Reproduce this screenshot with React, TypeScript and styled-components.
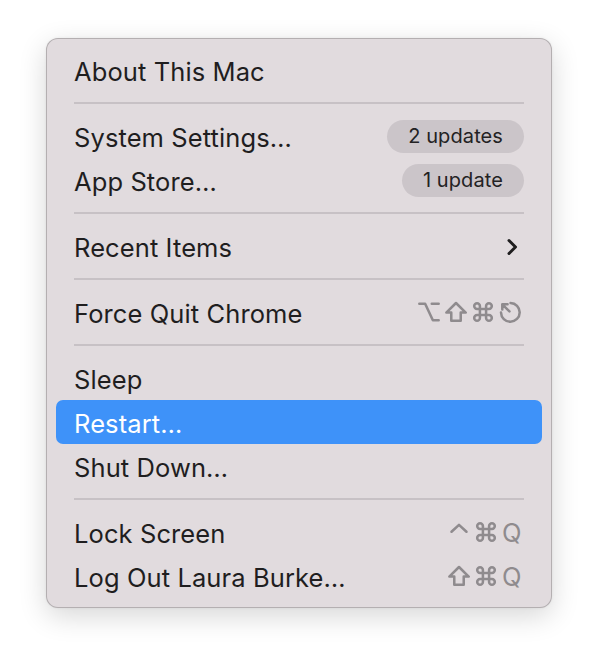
import * as React from "react";
import styled, { createGlobalStyle } from "styled-components";

const GlobalStyle = createGlobalStyle`
  html, body {
    margin: 0;
    padding: 0;
    background: #ffffff;
  }
  * {
    box-sizing: border-box;
  }
`;

const Page = styled.div`
  width: 598px;
  height: 662px;
  padding: 38px 46px 0 46px;
  font-family: Inter, "Liberation Sans", sans-serif;
`;

const Menu = styled.div`
  width: 506px;
  display: flex;
  flex-direction: column;
  padding: 9px;
  background: #e1dbde;
  border: 1px solid rgba(0, 0, 0, 0.2);
  border-radius: 12px;
  box-shadow: 0 8px 28px rgba(0, 0, 0, 0.16), 0 0 3px rgba(0, 0, 0, 0.06);
`;

const Item = styled.div<{ $active?: boolean }>`
  height: 44px;
  display: flex;
  align-items: center;
  justify-content: space-between;
  padding: 2px 18px 0 18px;
  border-radius: 7px;
  font-size: 25.5px;
  letter-spacing: 0.1px;
  color: ${(p) => (p.$active ? "#ffffff" : "#1f1e1f")};
  background: ${(p) => (p.$active ? "#3e92f9" : "transparent")};
`;

const Separator = styled.div`
  height: 22px;
  display: flex;
  align-items: center;
  padding: 0 18px;

  &::after {
    content: "";
    flex: 1;
    height: 2px;
    background: #c7c1c5;
  }
`;

const Badge = styled.span`
  height: 33px;
  margin-top: -2px;
  display: inline-flex;
  align-items: center;
  padding: 0 21px;
  border-radius: 17px;
  background: #cbc5c9;
  font-size: 20px;
  letter-spacing: 0.1px;
  color: #232223;
`;

const Shortcut = styled.span`
  display: flex;
  align-items: center;
  gap: 5px;
  margin-right: 3px;
  margin-top: -2px;
  color: #8f8b8e;
`;

const Key = styled.svg`
  width: 22px;
  height: 22px;
  fill: none;
  stroke: currentColor;
  stroke-width: 2.3;
  stroke-linecap: round;
  stroke-linejoin: round;
`;

const Letter = styled.span`
  font-size: 25.5px;
  line-height: 1;
  width: 19px;
  margin-top: 2px;
  text-align: center;
`;

const Chevron = styled.svg`
  width: 12px;
  height: 18px;
  margin-right: 6px;
  fill: none;
  stroke: #1f1e1f;
  stroke-width: 3;
  stroke-linecap: round;
  stroke-linejoin: round;
`;

const OptionKey = () => (
  <Key viewBox="0 0 20 20">
    <path d="M1.2 2.5H6.5L13.5 17.5H18.8M12.5 2.5H18.8" />
  </Key>
);

const ShiftKey = () => (
  <Key viewBox="0 0 20 20">
    <path d="M10 1.8L18.8 10.5H14.3V18H5.7V10.5H1.2Z" />
  </Key>
);

const CommandKey = () => (
  <Key viewBox="0 0 20 20">
    <path d="M7.2 7.2V12.8M12.8 7.2V12.8M7.2 7.2H12.8M7.2 12.8H12.8M7.2 7.2H4.6A2.6 2.6 0 1 1 7.2 4.6V7.2M12.8 7.2V4.6A2.6 2.6 0 1 1 15.4 7.2H12.8M12.8 12.8H15.4A2.6 2.6 0 1 1 12.8 15.4V12.8M7.2 12.8V15.4A2.6 2.6 0 1 1 4.6 12.8H7.2" />
  </Key>
);

const EscapeKey = () => (
  <Key viewBox="0 0 20 20">
    <path d="M10.5 1.8A8.5 8.5 0 1 1 1.8 10.5" />
    <path d="M3 3L9.5 9.5M3 3H7.8M3 3V7.8" />
  </Key>
);

const ControlKey = () => (
  <Key viewBox="0 0 20 20">
    <path d="M3.2 9.8L10 3.5L16.8 9.8" />
  </Key>
);

export default function App() {
  return (
    <Page>
      <GlobalStyle />
      <Menu>
        <Item>About This Mac</Item>
        <Separator />
        <Item>
          System Settings…<Badge>2 updates</Badge>
        </Item>
        <Item>
          App Store…<Badge>1 update</Badge>
        </Item>
        <Separator />
        <Item>
          Recent Items
          <Chevron viewBox="0 0 12 18">
            <path d="M3 2.5L9.5 9L3 15.5" />
          </Chevron>
        </Item>
        <Separator />
        <Item>
          Force Quit Chrome
          <Shortcut>
            <OptionKey />
            <ShiftKey />
            <CommandKey />
            <EscapeKey />
          </Shortcut>
        </Item>
        <Separator />
        <Item>Sleep</Item>
        <Item $active>Restart…</Item>
        <Item>Shut Down…</Item>
        <Separator />
        <Item>
          Lock Screen
          <Shortcut>
            <ControlKey />
            <CommandKey />
            <Letter>Q</Letter>
          </Shortcut>
        </Item>
        <Item>
          Log Out Laura Burke…
          <Shortcut>
            <ShiftKey />
            <CommandKey />
            <Letter>Q</Letter>
          </Shortcut>
        </Item>
      </Menu>
    </Page>
  );
}
